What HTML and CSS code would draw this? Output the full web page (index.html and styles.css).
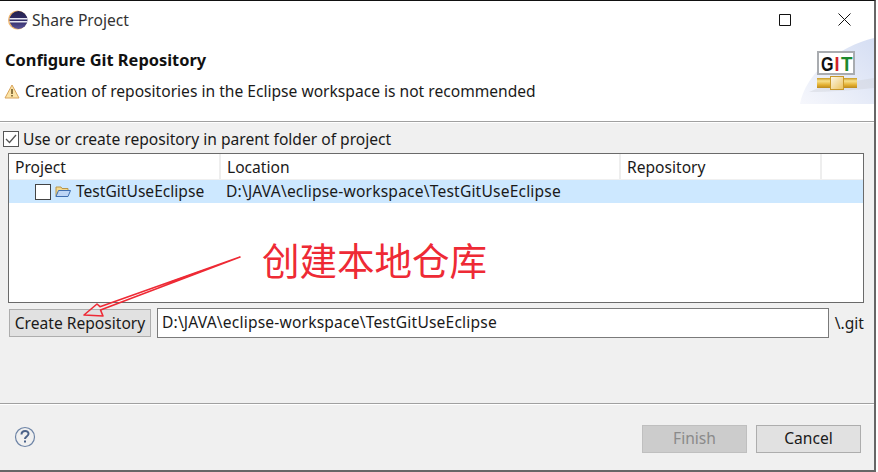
FILE: index.html
```html
<!DOCTYPE html>
<html lang="en">
<head>
<meta charset="utf-8">
<title>Share Project</title>
<link rel="stylesheet" href="styles.css">
</head>
<body>
<div class="window">
  <div class="titlebar">
    <svg class="app-icon" width="20" height="20" viewBox="0 0 20 20">
      <defs>
        <linearGradient id="ecl" x1="0" y1="0" x2="0" y2="1">
          <stop offset="0" stop-color="#25224f"/>
          <stop offset=".55" stop-color="#322c66"/>
          <stop offset="1" stop-color="#5a549a"/>
        </linearGradient>
      </defs>
      <circle cx="9.500" cy="10" r="9.500" fill="#eeb36a"/>
      <circle cx="10.500" cy="10" r="9" fill="url(#ecl)"/>
      <rect x="1.500" y="8" width="18" height="1.500" fill="#e6e6f2"/>
      <rect x="1.500" y="11" width="18" height="1.500" fill="#e6e6f2"/>
    </svg>
    <span class="title">Share Project</span>
    <div class="winctl">
      <svg class="ctl" width="12" height="12" viewBox="0 0 12 12"><path d="M.5 .5h11v11H.5z" fill="none" stroke="#111"/></svg>
      <svg class="ctl" width="13" height="13" viewBox="0 0 13 13"><path d="M.5 .5l12 12M12.500 .5l-12 12" fill="none" stroke="#111"/></svg>
    </div>
  </div>
  <header class="banner">
    <div class="banner-text">
      <h1 class="page-title">Configure Git Repository</h1>
      <div class="message">
        <svg class="warn" width="16" height="15" viewBox="0 0 16 15">
          <path d="M8 1L15 14H1z" fill="#fbe3a6" stroke="#d9a45a" stroke-linejoin="round"/>
          <path d="M8 5v5M8 11v1.600" stroke="#6b5320" stroke-width="1.500"/>
        </svg>
        <span>Creation of repositories in the Eclipse workspace is not recommended</span>
      </div>
    </div>
    <div class="banner-art">
      <svg width="75" height="66" viewBox="0 0 75 66">
        <defs>
          <linearGradient id="art" x1="1" y1="0" x2="0" y2="1">
            <stop offset="0" stop-color="#d5def3"/>
            <stop offset="1" stop-color="#f6f7fc"/>
          </linearGradient>
          <linearGradient id="pipe" x1="0" y1="0" x2="0" y2="1">
            <stop offset="0" stop-color="#c99a25"/>
            <stop offset=".3" stop-color="#f7e08a"/>
            <stop offset=".7" stop-color="#e3ae2e"/>
            <stop offset="1" stop-color="#bb8a1e"/>
          </linearGradient>
          <linearGradient id="blk" x1="0" y1="0" x2="1" y2="1">
            <stop offset="0" stop-color="#fbf8ee"/>
            <stop offset="1" stop-color="#ecc25a"/>
          </linearGradient>
        </defs>
        <path d="M1 66C6 36 40 8 75 0V66z" fill="url(#art)"/>
        <path d="M10 54C30 44 55 44 75 40V50C55 52 30 54 10 54z" fill="#c8cad2" opacity=".35"/>
        <rect x="19" y="14" width="36" height="22" fill="#fff" stroke="#a9acb0" stroke-width="2"/>
        <text class="git-g" x="22" y="33" textLength="12.500" lengthAdjust="spacingAndGlyphs">G</text>
        <text class="git-i" x="35.500" y="33" textLength="5" lengthAdjust="spacingAndGlyphs">I</text>
        <text class="git-t" x="42" y="33" textLength="11.500" lengthAdjust="spacingAndGlyphs">T</text>
        <rect x="18" y="40" width="40" height="10" fill="url(#pipe)"/>
        <rect x="31.500" y="38.500" width="13" height="13" fill="url(#blk)" stroke="#c9982a"/>
      </svg>
    </div>
  </header>
  <main class="content">
    <label class="use-parent">
      <svg class="check" width="16" height="16" viewBox="0 0 16 16">
        <rect x=".5" y=".5" width="15" height="15" fill="#fff" stroke="#555"/>
        <path d="M3 8l3.500 3.500L13 4" fill="none" stroke="#555" stroke-width="1.300"/>
      </svg>
      <span>Use or create repository in parent folder of project</span>
    </label>
    <div class="table">
      <div class="thead">
        <div class="th col-project">Project</div>
        <div class="th col-location">Location</div>
        <div class="th col-repo">Repository</div>
      </div>
      <div class="row">
        <div class="td col-project cell-project">
          <span class="box"></span>
          <svg class="folder" width="16" height="13" viewBox="0 0 16 13">
            <path d="M1 11.500V2h5l1 1.500h6v2" fill="#f3d98f" stroke="#b8964a"/>
            <path d="M1 11.500L3.500 5.500H15.500L13 11.500z" fill="#bcd5f5" stroke="#3f6fb0"/>
          </svg>
          <span>TestGitUseEclipse</span>
        </div>
        <div class="td col-location path-text">D:\JAVA\eclipse-workspace\TestGitUseEclipse</div>
      </div>
    </div>
    <div class="repo-row">
      <button class="btn create">Create Repository</button>
      <div class="path path-text">D:\JAVA\eclipse-workspace\TestGitUseEclipse</div>
      <span class="suffix">\.git</span>
    </div>
  </main>
  <footer class="footer">
    <svg class="help" width="22" height="22" viewBox="0 0 22 22">
      <circle cx="11" cy="11" r="9.500" fill="none" stroke="#6d84a6" stroke-width="1.200"/>
      <path d="M7.500 8.500c0-5 7.500-4.500 7-.5-.3 2.500-3.500 2.500-3.500 5" fill="none" stroke="#4b6288" stroke-width="2"/>
      <rect x="10" y="14.500" width="2" height="2" fill="#4b6288"/>
    </svg>
    <div class="actions">
      <button class="btn finish" disabled>Finish</button>
      <button class="btn cancel">Cancel</button>
    </div>
  </footer>
  <div class="note">创建本地仓库</div>
  <svg class="arrow" width="170" height="72" viewBox="0 0 170 72">
    <path d="M160 7L20 56.700L17 54L4 65L23 66L20.500 60z" fill="none" stroke="#ee2a35" stroke-width="1.600" stroke-linejoin="round"/>
    <path d="M160 7L90 31.500L92 33z" fill="#ee2a35"/>
  </svg>
</div>
</body>
</html>
```
FILE: styles.css
```css
* { box-sizing: border-box; }
html, body { margin: 0; padding: 0; background: #fff; }
body { width: 878px; height: 472px; overflow: hidden; font-family: "Noto Sans", "Noto Sans CJK SC", sans-serif; font-size: 15.6px; color: #1a1a1a; }
.window { position: relative; width: 876px; height: 472px; display: flex; flex-direction: column; background: #f0f0f0; border-top: 1px solid #111; border-right: 2px solid #666; border-bottom: 2px solid #666; }
.titlebar { height: 37px; display: flex; align-items: center; padding-left: 8px; background: #fff; }
.app-icon { margin-right: 4px; }
.title { color: #333; }
.winctl { margin-left: auto; display: flex; align-items: center; gap: 47px; padding-right: 23px; }
.banner { height: 84px; background: #fff; border-bottom: 1px solid #a0a0a0; display: flex; justify-content: space-between; box-shadow: 0 1px 0 #fff; }
.page-title { margin: 9px 0 0 5px; font-size: 16.400px; line-height: 26px; font-weight: 700; color: #111; }
.message { display: flex; align-items: center; gap: 5px; margin: 7px 0 0 4px; line-height: 22px; }
.banner-art { align-self: flex-end; display: flex; margin-bottom: 17px; }
.git-g, .git-i, .git-t { font-family: "Liberation Sans", sans-serif; font-size: 20.500px; font-weight: 700; }
.git-g { fill: #111; }
.git-i { fill: #d2222a; }
.git-t { fill: #1c8a2e; }
.content { flex: 1; padding: 2px 10px 0 3px; display: flex; flex-direction: column; }
.use-parent { display: flex; align-items: center; gap: 4px; height: 24px; margin-top: 3px; }
.check { flex: none; }
.table { margin: 2px 0 0 5px; width: 856px; height: 150px; flex: none; background: #fff; border: 1px solid #6a6a6a; }
.thead { display: flex; height: 26px; border-bottom: 1px solid #f0f0f0; }
.th { padding-left: 6px; line-height: 27px; border-right: 2px solid #eee; }
.thead .col-project { width: 212px; }
.thead .col-location { width: 400px; }
.thead .col-repo { width: 201px; }
.row { display: flex; height: 23px; background: #cde8ff; line-height: 23px; }
.td.col-project { width: 212px; }
.td.col-location { padding-left: 5px; }
.path-text { letter-spacing: .18px; }
.cell-project { display: flex; align-items: center; padding-left: 26px; }
.box { width: 16px; height: 16px; background: #fff; border: 1px solid #444; margin-right: 4px; }
.folder { margin-right: 5px; }
.repo-row { display: flex; align-items: center; margin: 5px 0 0 6px; height: 30px; }
.btn { font-family: inherit; font-size: 15.6px; color: #1a1a1a; background: #e1e1e1; border: 1px solid #adadad; padding: 0; margin: 0; }
.create { width: 142px; height: 28px; }
.path { width: 672px; height: 30px; margin-left: 6px; background: #fff; border: 1px solid #7a7a7a; padding-left: 4px; line-height: 27px; }
.suffix { margin-left: 6px; }
.footer { height: 67px; border-top: 1px solid #a0a0a0; box-shadow: inset 0 1px 0 #fff; display: flex; align-items: flex-start; justify-content: space-between; padding: 21px 13px 0 14px; }
.help { margin-top: 1px; }
.actions { display: flex; gap: 9px; }
.finish, .cancel { width: 105px; height: 28px; padding-bottom: 2px; }
.finish { background: #cccccc; border-color: #bfbfbf; color: #8a8a8a; }
.note { position: absolute; left: 262px; top: 234px; font-size: 37.500px; line-height: 48px; color: #ee2a35; font-family: "Noto Sans CJK SC", sans-serif; }
.arrow { position: absolute; left: 80px; top: 249px; }
```
